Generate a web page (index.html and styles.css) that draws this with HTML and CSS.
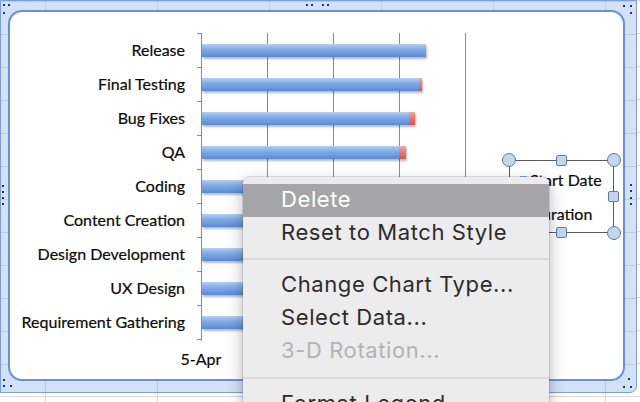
FILE: index.html
```html
<!DOCTYPE html>
<html lang="en">
<head>
  <meta charset="UTF-8">
  <meta name="viewport" content="width=device-width, initial-scale=1.0">
  <title>Gantt Chart</title>
  <link rel="stylesheet" href="styles.css">
</head>
<body>
  <div class="sheet">
    <div class="frame">
      <div class="chart">
        <div class="plot-area">
          <div class="labels">
            <div>Release</div>
            <div>Final Testing</div>
            <div>Bug Fixes</div>
            <div>QA</div>
            <div>Coding</div>
            <div>Content Creation</div>
            <div>Design Development</div>
            <div>UX Design</div>
            <div>Requirement Gathering</div>
          </div>
          <div class="ticks"></div>
          <div class="plot">
            <div class="row"><div class="bar"><span class="start" style="width:224px"></span></div></div>
            <div class="row"><div class="bar"><span class="start" style="width:217px"></span><span class="dur" style="width:3px"></span></div></div>
            <div class="row"><div class="bar"><span class="start" style="width:207px"></span><span class="dur" style="width:6px"></span></div></div>
            <div class="row"><div class="bar"><span class="start" style="width:197px"></span><span class="dur" style="width:7px"></span></div></div>
            <div class="row"><div class="bar"><span class="start" style="width:180px"></span><span class="dur" style="width:12px"></span></div></div>
            <div class="row"><div class="bar"><span class="start" style="width:150px"></span><span class="dur" style="width:20px"></span></div></div>
            <div class="row"><div class="bar"><span class="start" style="width:120px"></span><span class="dur" style="width:25px"></span></div></div>
            <div class="row"><div class="bar"><span class="start" style="width:90px"></span><span class="dur" style="width:20px"></span></div></div>
            <div class="row"><div class="bar"><span class="start" style="width:60px"></span><span class="dur" style="width:25px"></span></div></div>
          </div>
        </div>
        <div class="x-label">5-Apr</div>

        <div class="legend">
          <div class="entry"><span class="swatch"></span>Start Date</div>
          <div class="entry"><span class="swatch red"></span>Duration</div>
          <span class="handle circle tl"></span>
          <span class="handle square tm"></span>
          <span class="handle circle tr"></span>
          <span class="handle square rm"></span>
          <span class="handle circle br"></span>
          <span class="handle square bm"></span>
          <span class="handle circle bl"></span>
          <span class="handle square lm"></span>
        </div>
      </div>
    </div>

    <!-- selection grips around the chart object -->
    <span class="grip grip-tl"></span>
    <span class="grip grip-tm"></span>
    <span class="grip grip-tr"></span>
    <span class="grip grip-lm"></span>
    <span class="grip grip-rm"></span>
    <span class="grip grip-bl"></span>
    <span class="grip grip-br"></span>

    <div class="menu">
      <div class="item active">Delete</div>
      <div class="item">Reset to Match Style</div>
      <div class="sep"></div>
      <div class="item">Change Chart Type...</div>
      <div class="item">Select Data...</div>
      <div class="item disabled">3-D Rotation...</div>
      <div class="sep"></div>
      <div class="item">Format Legend...</div>
    </div>
  </div>
</body>
</html>
```

FILE: styles.css
```css
body {
  margin: 0;
  font-family: Lato, "Liberation Sans", sans-serif;
}

.sheet {
  position: relative;
  width: 640px;
  height: 402px;
  overflow: hidden;
  background-color: #fff;
  background-image:
    linear-gradient(to right, #d8d8d8 1px, transparent 1px),
    linear-gradient(to bottom, #d8d8d8 1px, transparent 1px);
  background-size: 112px 33px;
  background-position: 45px 0, 0 0;
}

.frame {
  box-sizing: border-box;
  width: 637px;
  height: 393px;
  padding: 9px 11px 11px 7px;
  border: 1px solid #7c9edb;
  border-radius: 0 0 7px 0;
  background-color: #d2e1f6;
  background-image:
    linear-gradient(to right, #b8cbe8 1px, transparent 1px),
    linear-gradient(to bottom, #b8cbe8 1px, transparent 1px);
  background-size: 112px 33px;
  background-position: 44px 0, 0 0;
}

.chart {
  position: relative;
  box-sizing: border-box;
  width: 617px;
  height: 371px;
  padding-top: 21px;
  border: 2px solid #6790d8;
  border-radius: 14px;
  background: #fff;
  color: #0a0a0a;
  -webkit-text-stroke: 0.2px #0a0a0a;
}

.plot-area {
  display: flex;
  height: 308px;
}

.labels {
  box-sizing: border-box;
  width: 187px;
  padding-right: 12px;
  display: grid;
  grid-template-rows: repeat(9, 34px);
  text-align: right;
  font-size: 16px;
  line-height: 34px;
  white-space: nowrap;
}

.ticks {
  width: 4px;
  height: 307px;
  background: repeating-linear-gradient(to bottom, #8a8a8a 0 1px, transparent 1px 34px);
}

.plot {
  width: 265px;
  padding-left: 1px;
  display: grid;
  grid-template-rows: repeat(9, 34px);
  background: repeating-linear-gradient(to right, #8c8c8c 0 1px, transparent 1px 66px);
}

.row {
  display: flex;
  align-items: center;
}

.bar {
  display: flex;
  height: 13px;
  box-shadow: 1px 2px 2px rgba(0, 0, 0, 0.28);
}

.bar .start {
  background: linear-gradient(to bottom, #b3cff4 0%, #82ace9 40%, #5a8ad7 100%);
}

.bar .dur {
  background: linear-gradient(to bottom, #f6aaa2 0%, #ea7a72 45%, #d9544f 100%);
}

.x-label {
  width: 60px;
  margin: 9px 0 0 161px;
  text-align: center;
  font-size: 16px;
  line-height: 18px;
}

.legend {
  position: absolute;
  left: 499px;
  top: 148px;
  box-sizing: border-box;
  width: 105px;
  height: 73px;
  padding-top: 1px;
  border: 1px solid #5a5a5a;
}

.entry {
  display: flex;
  align-items: center;
  gap: 3px;
  height: 34px;
  padding-left: 10px;
  font-size: 16px;
  white-space: nowrap;
}

.swatch {
  width: 7px;
  height: 7px;
  background: linear-gradient(#8ab2ea, #5b8ad6);
}

.swatch.red {
  background: linear-gradient(#f0958e, #d9544f);
}

.handle {
  position: absolute;
  box-sizing: border-box;
  border: 1px solid #5b7da6;
  background: #c6d6ea;
}

.handle.circle {
  width: 14px;
  height: 14px;
  border-radius: 50%;
}

.handle.square {
  width: 11px;
  height: 11px;
  border-radius: 2px;
}

.circle.tl { left: -8px; top: -8px; }
.circle.tr { right: -8px; top: -8px; }
.circle.br { right: -8px; bottom: -8px; }
.circle.bl { left: -8px; bottom: -8px; }
.square.tm { left: 46px; top: -6px; }
.square.bm { left: 46px; bottom: -6px; }
.square.rm { right: -6px; top: 30px; }
.square.lm { left: -6px; top: 30px; }

.grip {
  position: absolute;
  width: 2px;
  height: 2px;
  background: #1c3a78;
}

.grip-tl { left: 3px; top: 4px; box-shadow: 5px 0 #1c3a78, 0 8px #1c3a78; }
.grip-tm { left: 306px; top: 4px; box-shadow: 5px 0 #1c3a78, 16px 0 #1c3a78, 21px 0 #1c3a78; }
.grip-tr { left: 623px; top: 5px; box-shadow: 7px 0 #1c3a78, 7px 7px #1c3a78; }
.grip-lm { left: 2px; top: 185px; box-shadow: 0 6px #1c3a78, 0 12px #1c3a78, 0 18px #1c3a78; }
.grip-rm { left: 630px; top: 184px; box-shadow: 0 6px #1c3a78, 0 13px #1c3a78, 0 19px #1c3a78; }
.grip-bl { left: 3px; top: 379px; box-shadow: 0 6px #1c3a78, 7px 6px #1c3a78; }
.grip-br { left: 628px; top: 378px; box-shadow: -5px 8px #1c3a78, 2px 8px #1c3a78; }

.menu {
  position: absolute;
  left: 243px;
  top: 177px;
  box-sizing: border-box;
  width: 306px;
  height: 260px;
  padding-top: 7px;
  background: #ececec;
  border-radius: 6px 6px 0 0;
  box-shadow: 0 0 0 1px rgba(0, 0, 0, 0.1), 0 6px 16px rgba(0, 0, 0, 0.3);
  font-family: Inter, "Liberation Sans", sans-serif;
  font-size: 22px;
  letter-spacing: 0.6px;
  color: #2c2c2c;
}

.item {
  height: 33px;
  line-height: 30px;
  padding-left: 38px;
  white-space: nowrap;
}

.item.active {
  background: #a5a5a7;
  color: #fff;
}

.item.disabled {
  color: #b3b3b3;
}

.sep {
  height: 2px;
  margin: 8px 0 9px;
  background: #d9d9d9;
}

.sep + .item + .item + .item + .sep {
  margin-top: 9px;
}
```
